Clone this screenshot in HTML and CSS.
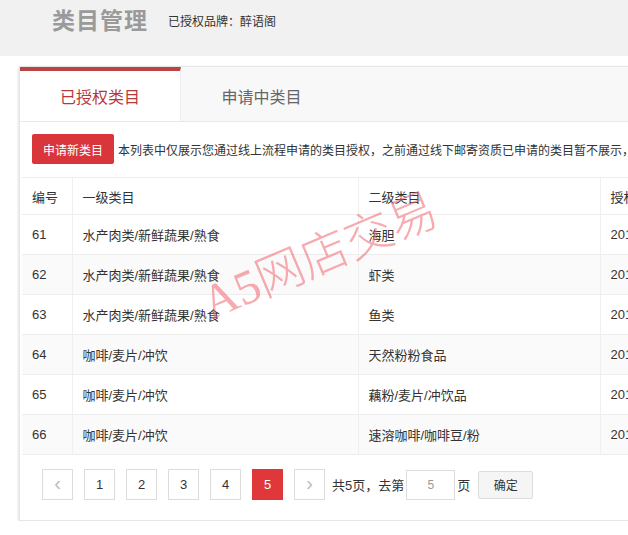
FILE: index.html
```html
<!DOCTYPE html>
<html lang="zh-CN">
<head>
<meta charset="utf-8">
<title>类目管理</title>
<link rel="stylesheet" href="styles.css">
</head>
<body>
<header class="top">
  <h1 class="title">类目管理</h1>
  <span class="brand">已授权品牌：醉语阁</span>
</header>
<main class="card">
  <nav class="tabs">
    <div class="tab active">已授权类目</div>
    <div class="tab">申请中类目</div>
  </nav>
  <div class="body">
    <div class="toolbar">
      <button class="apply">申请新类目</button>
      <span class="note">本列表中仅展示您通过线上流程申请的类目授权，之前通过线下邮寄资质已申请的类目暂不展示，如需查看请联系小二</span>
    </div>
    <table class="grid">
      <colgroup><col class="c1"><col class="c2"><col class="c3"><col class="c4"></colgroup>
      <thead><tr><th>编号</th><th>一级类目</th><th>二级类目</th><th>授权时间</th></tr></thead>
      <tbody>
        <tr><td>61</td><td>水产肉类/新鲜蔬果/熟食</td><td>海胆</td><td>2016-08-12</td></tr>
        <tr class="alt"><td>62</td><td>水产肉类/新鲜蔬果/熟食</td><td>虾类</td><td>2016-08-12</td></tr>
        <tr><td>63</td><td>水产肉类/新鲜蔬果/熟食</td><td>鱼类</td><td>2016-08-12</td></tr>
        <tr class="alt"><td>64</td><td>咖啡/麦片/冲饮</td><td>天然粉粉食品</td><td>2016-08-12</td></tr>
        <tr><td>65</td><td>咖啡/麦片/冲饮</td><td>藕粉/麦片/冲饮品</td><td>2016-08-12</td></tr>
        <tr class="alt"><td>66</td><td>咖啡/麦片/冲饮</td><td>速溶咖啡/咖啡豆/粉</td><td>2016-08-12</td></tr>
      </tbody>
    </table>
    <div class="pager">
      <span class="pg nav">&lsaquo;</span>
      <span class="pg">1</span>
      <span class="pg">2</span>
      <span class="pg">3</span>
      <span class="pg">4</span>
      <span class="pg cur">5</span>
      <span class="pg nav">&rsaquo;</span>
      <span class="total">共5页，去第</span>
      <input class="goto" value="5">
      <span class="unit">页</span>
      <button class="ok">确定</button>
    </div>
  </div>
  <div class="watermark">A5网店交易</div>
</main>
</body>
</html>
```

FILE: styles.css
```css
html, body {
  margin: 0;
  padding: 0;
  background: #fff;
  font-family: "Liberation Sans", "Noto Sans CJK SC", sans-serif;
  color: #333;
  overflow: hidden;
}
.top {
  height: 56px;
  background: #f1f1f1;
  display: flex;
  align-items: center;
  padding-left: 52px;
  padding-bottom: 18px;
  box-sizing: border-box;
}
.title {
  margin: 0;
  font-size: 23px;
  font-weight: bold;
  color: #9a9a9a;
  letter-spacing: 1px;
}
.brand {
  margin-left: 20px;
  font-size: 12px;
  color: #333;
  padding-top: 2px;
}
.card {
  position: relative;
  margin: 10px -40px 0 19px;
  border: 1px solid #e6e6e6;
  box-shadow: 0 2px 3px rgba(0,0,0,0.12), -1px 0 2px rgba(0,0,0,0.05);
  height: 455px;
  box-sizing: border-box;
  overflow: hidden;
  background: #fff;
}
.tabs {
  display: flex;
  height: 54px;
  background: #f8f8f8;
  border-bottom: 1px solid #e8e8e8;
}
.tab {
  width: 161px;
  display: flex;
  align-items: center;
  justify-content: center;
  font-size: 16px;
  color: #666;
  padding-top: 3px;
  box-sizing: border-box;
}
.tab.active {
  background: #fff;
  color: #b5393b;
  border-top: 4px solid #b84444;
  padding-top: 0;
  border-right: 1px solid #eee;
}
.body {
  padding: 12px 0 0 2px;
}
.toolbar {
  display: flex;
  align-items: center;
  white-space: nowrap;
  padding-left: 10px;
  height: 30px;
}
.apply {
  flex-shrink: 0;
  width: 82px;
  height: 30px;
  border: 0;
  border-radius: 2px;
  background: #d9363c;
  color: #fff;
  font-family: inherit;
  font-size: 12px;
  padding: 0;
}
.note {
  margin-left: 4px;
  font-size: 12px;
  color: #333;
}
.grid {
  margin-top: 13px;
  border-collapse: collapse;
  table-layout: fixed;
  width: 680px;
  font-size: 13px;
  color: #333;
}
.c1 { width: 50px; }
.c2 { width: 286px; }
.c3 { width: 242px; }
.c4 { width: 102px; }
.grid th, .grid td {
  text-align: left;
  font-weight: normal;
  padding: 0 0 0 10px;
  border-top: 1px solid #ededed;
  border-left: 1px solid #efefef;
  white-space: nowrap;
  overflow: hidden;
}
.grid th:first-child, .grid td:first-child { border-left: 0; }
.grid th { height: 36px; font-size: 13px; }
.grid td { height: 39px; }
.grid tr.alt td { background: #fafafa; }
.grid tbody tr:last-child td { border-bottom: 1px solid #ededed; }
.pager {
  display: flex;
  align-items: center;
  padding: 14px 0 0 20px;
  font-size: 13px;
}
.pg {
  width: 29px;
  height: 29px;
  border: 1px solid #dcdcdc;
  display: flex;
  align-items: center;
  justify-content: center;
  margin-right: 11px;
  color: #333;
  background: #fff;
  font-size: 13px;
}
.pg.nav { color: #bbb; font-size: 20px; padding-bottom: 3px; box-sizing: content-box; height: 26px; }
.pg.cur { background: #e0383a; border-color: #e0383a; color: #fff; }
.pager .pg:nth-child(7) { margin-right: 7px; }
.total { color: #333; }
.goto {
  width: 47px;
  height: 28px;
  border: 1px solid #ddd;
  margin-left: 2px;
  padding: 0;
  text-align: center;
  font-family: inherit;
  font-size: 12px;
  color: #999;
  box-sizing: content-box;
}
.unit { margin-left: 2px; }
.ok {
  margin-left: 8px;
  width: 55px;
  height: 28px;
  border: 1px solid #ddd;
  border-radius: 2px;
  background: #f5f5f5;
  font-family: inherit;
  font-size: 12px;
  color: #333;
  padding: 0;
}
.watermark {
  position: absolute;
  left: 196px;
  top: 196px;
  font-family: "Liberation Serif", "Noto Sans CJK SC", serif;
  font-size: 48px;
  font-weight: 300;
  color: rgba(240, 100, 110, 0.55);
  transform: rotate(-23deg);
  transform-origin: left bottom;
  white-space: nowrap;
  pointer-events: none;
}
```
